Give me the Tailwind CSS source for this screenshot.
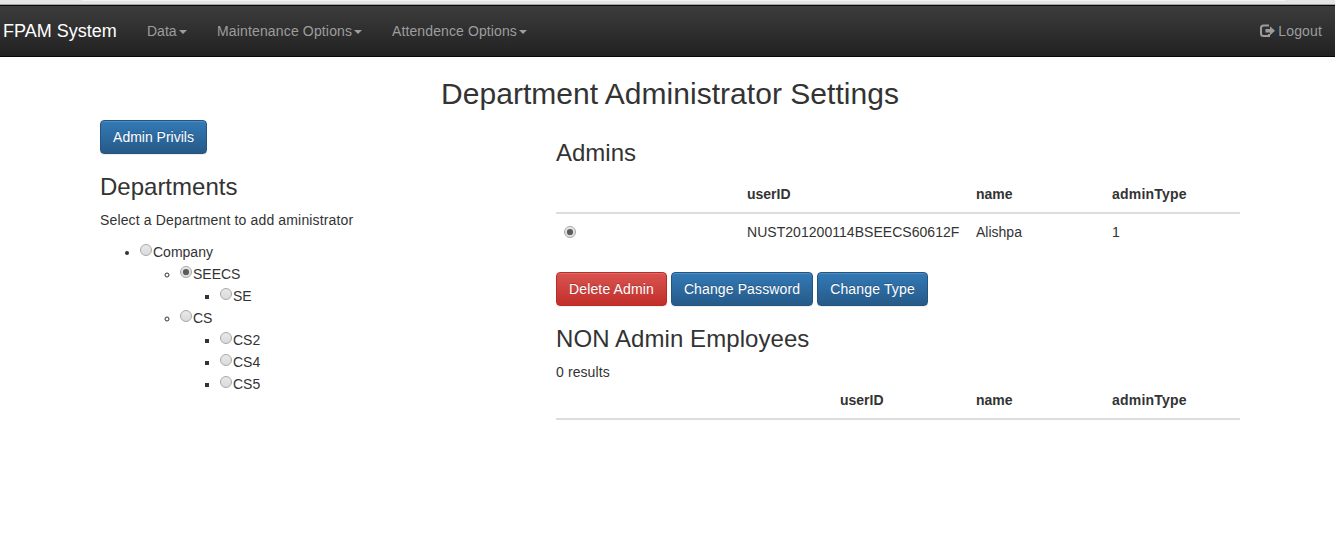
<!DOCTYPE html>
<html lang="en">
<head>
<meta charset="utf-8">
<title>FPAM System</title>
<script src="https://cdn.jsdelivr.net/npm/@tailwindcss/browser@4"></script>
</head>
<body class="bg-white font-['Liberation_Sans',Arial,sans-serif] text-[14px] leading-[20px] text-[#333] h-[534px] overflow-hidden">
<svg class="absolute w-0 h-0">
  <defs>
    <linearGradient id="rg" x1="0" y1="0" x2="0" y2="1"><stop offset="0" stop-color="#e9e9e9"/><stop offset="1" stop-color="#dadada"/></linearGradient>
    <symbol id="off" viewBox="0 0 13 13"><circle cx="6" cy="7" r="5.5" fill="url(#rg)" stroke="#a9a9a9"/></symbol>
    <symbol id="on" viewBox="0 0 13 13"><circle cx="6" cy="7" r="5.5" fill="url(#rg)" stroke="#a9a9a9"/><circle cx="6" cy="7" r="3.1" fill="#5c5c5c"/></symbol>
  </defs>
</svg>
<div class="h-[5px] bg-[#e4e4e4] border-b border-[#a5a5a5]"><div class="h-px w-[1203px] ml-[82px] bg-[#f2f2f2]"></div></div>
<nav class="h-[52px] border-y border-[#080808] bg-linear-to-b from-[#3c3c3c] to-[#222] flex items-center text-[#9d9d9d]">
  <a class="w-[147px] pl-[3px] text-[18px] text-white">FPAM System</a>
  <a class="w-[70px] flex items-center"><span>Data</span><i class="ml-[2px] mt-[2px] border-x-4 border-t-4 border-x-transparent border-t-[#9d9d9d]"></i></a>
  <a class="w-[175px] flex items-center whitespace-nowrap"><span class="tracking-[0.15px]">Maintenance Options</span><i class="ml-[2px] mt-[2px] border-x-4 border-t-4 border-x-transparent border-t-[#9d9d9d]"></i></a>
  <a class="flex items-center whitespace-nowrap"><span class="tracking-[0.11px]">Attendence Options</span><i class="ml-[2px] mt-[2px] border-x-4 border-t-4 border-x-transparent border-t-[#9d9d9d]"></i></a>
  <a class="ml-auto mr-[13px] flex items-center gap-[3px]">
    <svg class="w-[15px] h-[14px]" viewBox="0 0 15 14" fill="none"><path d="M9 1.5H3.5Q1 1.5 1 4V9.5Q1 12 3.5 12H9V10" stroke="#9d9d9d" stroke-width="2"/><path d="M5.5 5H10V2.2L15 6.8L10 11.2V8.4H5.5Z" fill="#9d9d9d"/></svg>
    <span class="tracking-[0.15px]">Logout</span></a>
</nav>
<main class="w-[1140px] ml-[100px] pt-[20px]">
  <h2 class="text-[30px] leading-[33px] text-center whitespace-nowrap tracking-[0.03px]">Department Administrator Settings</h2>
  <div class="flex pt-[10px]">
    <section class="w-[456px]">
      <button class="h-[34px] w-[107px] block rounded-[4px] border border-[#245580] bg-linear-to-b from-[#337ab7] to-[#265a88] text-white whitespace-nowrap shadow-[inset_0_1px_0_rgba(255,255,255,.15),0_1px_1px_rgba(0,0,0,.075)] [text-shadow:0_-1px_0_rgba(0,0,0,.2)]">Admin Privils</button>
      <h3 class="mt-[20px] text-[24px] leading-[26px]">Departments</h3>
      <p class="mt-[10px] tracking-[0.15px]">Select a Department to add aministrator</p>
      <ul class="mt-[11px] pl-[40px] list-disc leading-[22px]">
        <li class="whitespace-nowrap"><svg class="inline-block align-[1px] w-[13px] h-[13px]"><use href="#off"/></svg>Company
          <ul class="pl-[40px] list-[circle]">
            <li><svg class="inline-block align-[1px] w-[13px] h-[13px]"><use href="#on"/></svg>SEECS
              <ul class="pl-[40px] list-[square]"><li><svg class="inline-block align-[1px] w-[13px] h-[13px]"><use href="#off"/></svg>SE</li></ul>
            </li>
            <li><svg class="inline-block align-[1px] w-[13px] h-[13px]"><use href="#off"/></svg>CS
              <ul class="pl-[40px] list-[square]">
                <li><svg class="inline-block align-[1px] w-[13px] h-[13px]"><use href="#off"/></svg>CS2</li>
                <li><svg class="inline-block align-[1px] w-[13px] h-[13px]"><use href="#off"/></svg>CS4</li>
                <li><svg class="inline-block align-[1px] w-[13px] h-[13px]"><use href="#off"/></svg>CS5</li>
              </ul>
            </li>
          </ul>
        </li>
      </ul>
    </section>
    <section class="w-[684px] pt-[20px]">
      <h3 class="text-[24px] leading-[26px]">Admins</h3>
      <div class="mt-[10px] grid grid-cols-[183px_229px_136px_136px] h-[38px] border-b-2 border-[#ddd] pt-[8px] font-bold">
        <span></span><span class="pl-[8px]">userID</span><span class="pl-[8px]">name</span><span class="pl-[8px] tracking-[0.2px]">adminType</span>
      </div>
      <div class="grid grid-cols-[183px_229px_136px_136px] h-[36px] pt-[8px]">
        <span class="pl-[8px] pt-[3px]"><svg class="w-[13px] h-[13px]"><use href="#on"/></svg></span><span class="pl-[8px] tracking-[0.04px]">NUST201200114BSEECS60612F</span><span class="pl-[8px]">Alishpa</span><span class="pl-[8px]">1</span>
      </div>
      <div class="mt-[22px] flex gap-[4px] text-white whitespace-nowrap">
        <button class="h-[34px] w-[111px] rounded-[4px] border border-[#b92c28] bg-linear-to-b from-[#d9534f] to-[#c12e2a] shadow-[inset_0_1px_0_rgba(255,255,255,.15),0_1px_1px_rgba(0,0,0,.075)] [text-shadow:0_-1px_0_rgba(0,0,0,.2)] tracking-[0.15px]">Delete Admin</button>
        <button class="h-[34px] w-[142px] rounded-[4px] border border-[#245580] bg-linear-to-b from-[#337ab7] to-[#265a88] shadow-[inset_0_1px_0_rgba(255,255,255,.15),0_1px_1px_rgba(0,0,0,.075)] [text-shadow:0_-1px_0_rgba(0,0,0,.2)] tracking-[0.12px]">Change Password</button>
        <button class="h-[34px] w-[111px] rounded-[4px] border border-[#245580] bg-linear-to-b from-[#337ab7] to-[#265a88] shadow-[inset_0_1px_0_rgba(255,255,255,.15),0_1px_1px_rgba(0,0,0,.075)] [text-shadow:0_-1px_0_rgba(0,0,0,.2)] tracking-[0.15px]">Change Type</button>
      </div>
      <h3 class="mt-[20px] text-[24px] leading-[26px] tracking-[0.07px]">NON Admin Employees</h3>
      <p class="mt-[10px] tracking-[0.1px]">0 results</p>
      <div class="grid grid-cols-[276px_136px_136px_136px] h-[38px] border-b-2 border-[#ddd] pt-[8px] font-bold">
        <span></span><span class="pl-[8px]">userID</span><span class="pl-[8px]">name</span><span class="pl-[8px] tracking-[0.2px]">adminType</span>
      </div>
    </section>
  </div>
</main>
</body>
</html>
